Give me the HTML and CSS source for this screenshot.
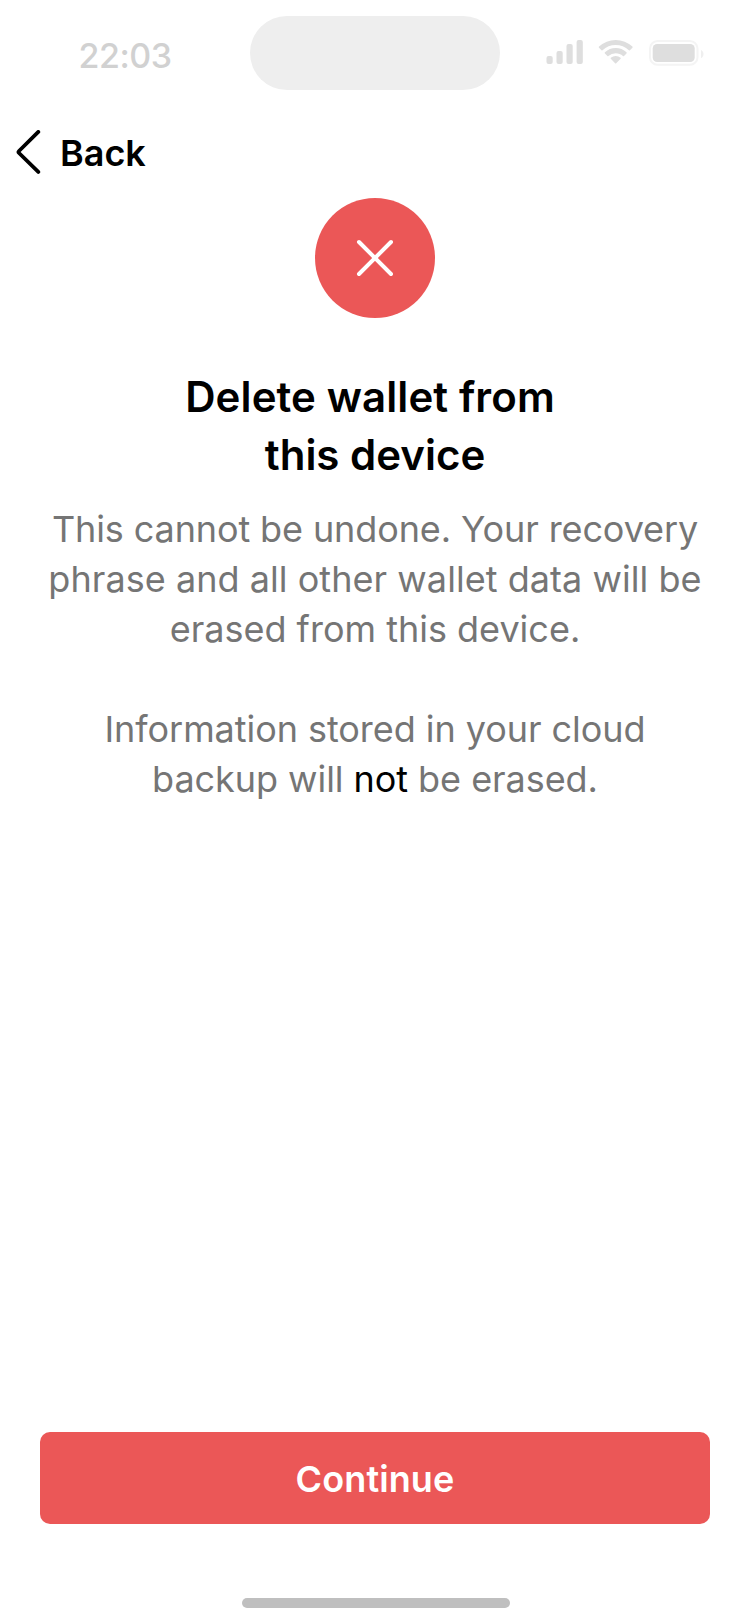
FILE: index.html
```html
<!DOCTYPE html>
<html lang="en">
<head>
<meta charset="utf-8">
<title>Delete wallet</title>
<link rel="stylesheet" href="styles.css">
</head>
<body>
<div class="screen">
  <header class="status">
    <span class="time">22:03</span>
    <span class="island"></span>
    <svg class="indicators" width="160" height="30" viewBox="0 0 160 30">
      <g fill="#dedede">
        <rect x="0.500" y="17" width="6.200" height="8" rx="2"/>
        <rect x="10.500" y="12" width="6.200" height="13" rx="2"/>
        <rect x="20.500" y="5" width="6.200" height="20" rx="2"/>
        <rect x="30.600" y="1" width="6.200" height="24" rx="2"/>
        <path d="M69.700 6.100c4.900 0 9.600 1.900 13.200 5.200.3.300.7.300 1 0l2.500-2.600c.3-.3.300-.8 0-1.100a24.200 24.200 0 0 0-33.400 0c-.3.300-.3.800 0 1.100l2.500 2.600c.3.300.7.300 1 0a19.400 19.400 0 0 1 13.200-5.200z"/>
        <path d="M69.700 14.200c2.700 0 5.300 1 7.300 2.800.3.300.7.300 1 0l2.500-2.600c.3-.3.300-.8 0-1.100a15.800 15.800 0 0 0-21.600 0c-.3.300-.3.800 0 1.100l2.500 2.600c.3.300.7.300 1 0a10.900 10.900 0 0 1 7.300-2.800z"/>
        <path d="M74.600 19.800c.3-.3.300-.8 0-1.100a7.700 7.700 0 0 0-9.800 0c-.3.300-.3.800 0 1.100l4.300 4.400c.3.300.8.300 1.100 0z"/>
        <rect x="106.700" y="5" width="42" height="18" rx="4.500"/>
        <path fill="#efefef" d="M155 11v8.200c3.400-1.400 3.400-6.800 0-8.200z"/>
      </g>
      <rect x="104" y="2" width="47.500" height="23.800" rx="7.600" fill="none" stroke="#f4f4f4" stroke-width="2"/>
    </svg>
  </header>
  <nav class="back">
    <svg width="26" height="46" viewBox="0 0 26 46"><path d="M23.300 1.900 4 21q-1 1 0 2l19.300 18.900" fill="none" stroke="#000" stroke-width="3.800" stroke-linecap="round" stroke-linejoin="round"/></svg>
    <span>Back</span>
  </nav>
  <main>
    <div class="badge"><svg width="40" height="40" viewBox="0 0 40 40"><path d="M4 4l32 32M36 4 4 36" fill="none" stroke="#fff" stroke-width="4" stroke-linecap="round"/></svg></div>
    <h1><span class="first">Delete wallet from</span><br>this device</h1>
    <p><span class="tight">This cannot be undone. Your recovery</span><br><span class="loose">phrase and all other wallet data will be</span><br>erased from this device.</p>
    <p class="cloud">Information stored in your cloud<br>backup will <b>not</b> be erased.</p>
  </main>
  <button class="continue">Continue</button>
  <div class="home"></div>
</div>
</body>
</html>
```
FILE: styles.css
```css
body { margin: 0; background: #fff; font-family: Inter, sans-serif; }
.screen { width: 750px; height: 1624px; display: flex; flex-direction: column; overflow: hidden; }
.status { display: grid; grid-template-columns: 250px 250px 250px; height: 120px; }
.time { margin: 34px 0 0; text-align: center; font-size: 34px; line-height: 44px; font-weight: 550; letter-spacing: -0.5px; color: #d1d1d1; }
.island { height: 74px; margin-top: 16px; border-radius: 37px; background: #eee; }
.indicators { margin: 39px 0 0 46px; }
.back { display: flex; align-items: center; height: 66px; padding-left: 15px; gap: 19px; font-size: 36px; font-weight: 600; }
main { display: flex; flex-direction: column; align-items: center; flex: 1; padding-top: 12px; text-align: center; }
.badge { width: 120px; height: 120px; border-radius: 50%; background: #eb5757; display: flex; align-items: center; justify-content: center; }
h1 { margin: 50px 0 0; font-size: 42px; line-height: 58px; font-weight: 600; white-space: nowrap; }
.first { margin-right: 10px; letter-spacing: 0.1px; }
p { margin: 20px 0 0; font-size: 36px; line-height: 50px; color: #757575; white-space: nowrap; }
.tight { letter-spacing: -0.11px; }
.loose { letter-spacing: 0.05px; }
.cloud { margin-top: 50px; letter-spacing: -0.05px; }
b { font-weight: 400; color: #000; }
.continue { flex: none; height: 92px; margin: 0 40px; padding: 2px 0 0; border: 0; border-radius: 10px; background: #eb5757; color: #fff; font: 600 36px Inter, sans-serif; letter-spacing: 0.1px; }
.home { flex: none; width: 268px; height: 10px; border-radius: 5px; background: #bfbfbf; margin: 74px 0 16px 242px; }
```
